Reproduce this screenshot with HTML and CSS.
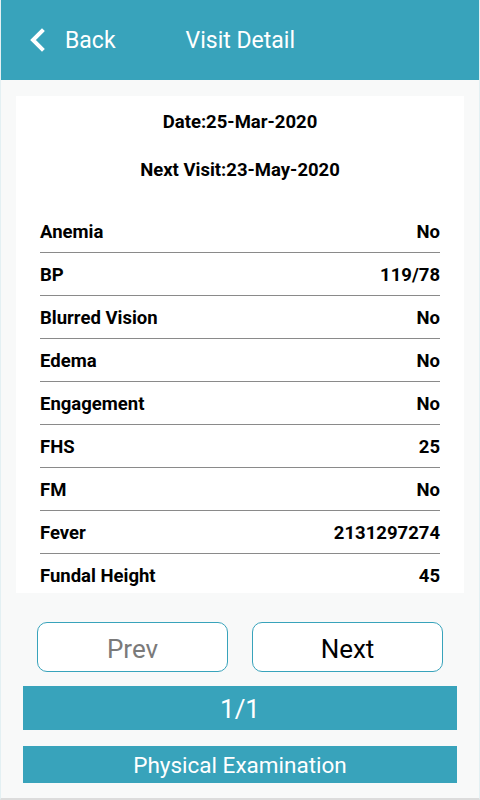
FILE: index.html
```html
<!DOCTYPE html>
<html lang="en">
<head>
    <meta charset="UTF-8">
    <meta name="viewport" content="width=device-width, initial-scale=1.0">
    <title>Visit Detail</title>
    <link rel="stylesheet" href="styles.css">
</head>
<body>
    <div class="pantalla">
        <div class="cabecera">
            <a class="volver" href="#">
                <svg width="18" height="24" viewBox="0 0 18 24">
                    <path d="M14 3 L5 12 L14 21" fill="none" stroke="#fff" stroke-width="4" stroke-linecap="square"/>
                </svg>
                <span>Back</span>
            </a>
            <span class="titulo">Visit Detail</span>
        </div>

        <div class="contenido">
            <div class="tarjeta">
                <div class="fecha">Date:25-Mar-2020</div>
                <div class="fecha proxima">Next Visit:23-May-2020</div>

                <div class="fila"><span>Anemia</span><span>No</span></div>
                <div class="fila"><span>BP</span><span>119/78</span></div>
                <div class="fila"><span>Blurred Vision</span><span>No</span></div>
                <div class="fila"><span>Edema</span><span>No</span></div>
                <div class="fila"><span>Engagement</span><span>No</span></div>
                <div class="fila"><span>FHS</span><span>25</span></div>
                <div class="fila"><span>FM</span><span>No</span></div>
                <div class="fila"><span>Fever</span><span>2131297274</span></div>
                <div class="fila"><span>Fundal Height</span><span>45</span></div>
            </div>

            <div class="botones">
                <button class="boton" disabled>Prev</button>
                <button class="boton">Next</button>
            </div>

            <div class="barra pagina">1/1</div>
            <div class="barra seccion">Physical Examination</div>
        </div>
    </div>
</body>
</html>
```

FILE: styles.css
```css
* {
    box-sizing: border-box;
}
body {
    margin: 0;
    font-family: Roboto, "Liberation Sans", sans-serif;
    background-color: #f8f9f9;
}
.pantalla {
    height: 800px;
    border-left: 1px solid #e3f0f3;
    border-right: 1px solid #e3f0f3;
    border-bottom: 2px solid #dcdcdc;
    display: flex;
    flex-direction: column;
}
.cabecera {
    height: 80px;
    background: #38a3bb;
    color: white;
    display: flex;
    align-items: center;
    font-size: 23px;
    padding-left: 27px;
}
.volver {
    display: flex;
    align-items: center;
    color: white;
    text-decoration: none;
    gap: 19px;
}
.volver svg {
    margin-top: -1px;
}
.titulo {
    margin-left: 70px;
}
.contenido {
    padding: 16px 15px 0;
}
.tarjeta {
    background: white;
    height: 497px;
    overflow: hidden;
    padding: 14px 24px 0;
}
.fecha {
    text-align: center;
    font-weight: bold;
    font-size: 18.5px;
    line-height: 24px;
    color: #000;
}
.proxima {
    margin-top: 24px;
    margin-bottom: 28px;
}
.fila {
    display: flex;
    justify-content: space-between;
    align-items: center;
    height: 43px;
    padding-top: 1px;
    border-bottom: 1.5px solid #8a8a8a;
    font-weight: bold;
    font-size: 18.5px;
    color: #000;
}
.fila:last-child {
    border-bottom: none;
}
.botones {
    display: flex;
    justify-content: space-between;
    padding: 0 21px;
    margin-top: 29px;
}
.boton {
    width: 191px;
    height: 50px;
    padding: 3px 0 0;
    background: white;
    border: 1.5px solid #38a3bb;
    border-radius: 10px;
    font-family: Roboto, "Liberation Sans", sans-serif;
    font-size: 26px;
    color: #000;
}
.boton:disabled {
    color: #7a7a7a;
}
.barra {
    margin: 0 7px;
    background: #38a3bb;
    color: white;
    text-align: center;
}
.pagina {
    margin-top: 14px;
    height: 44px;
    line-height: 46px;
    font-size: 26px;
}
.seccion {
    margin-top: 16px;
    height: 37px;
    line-height: 38px;
    font-size: 22.5px;
}
```
